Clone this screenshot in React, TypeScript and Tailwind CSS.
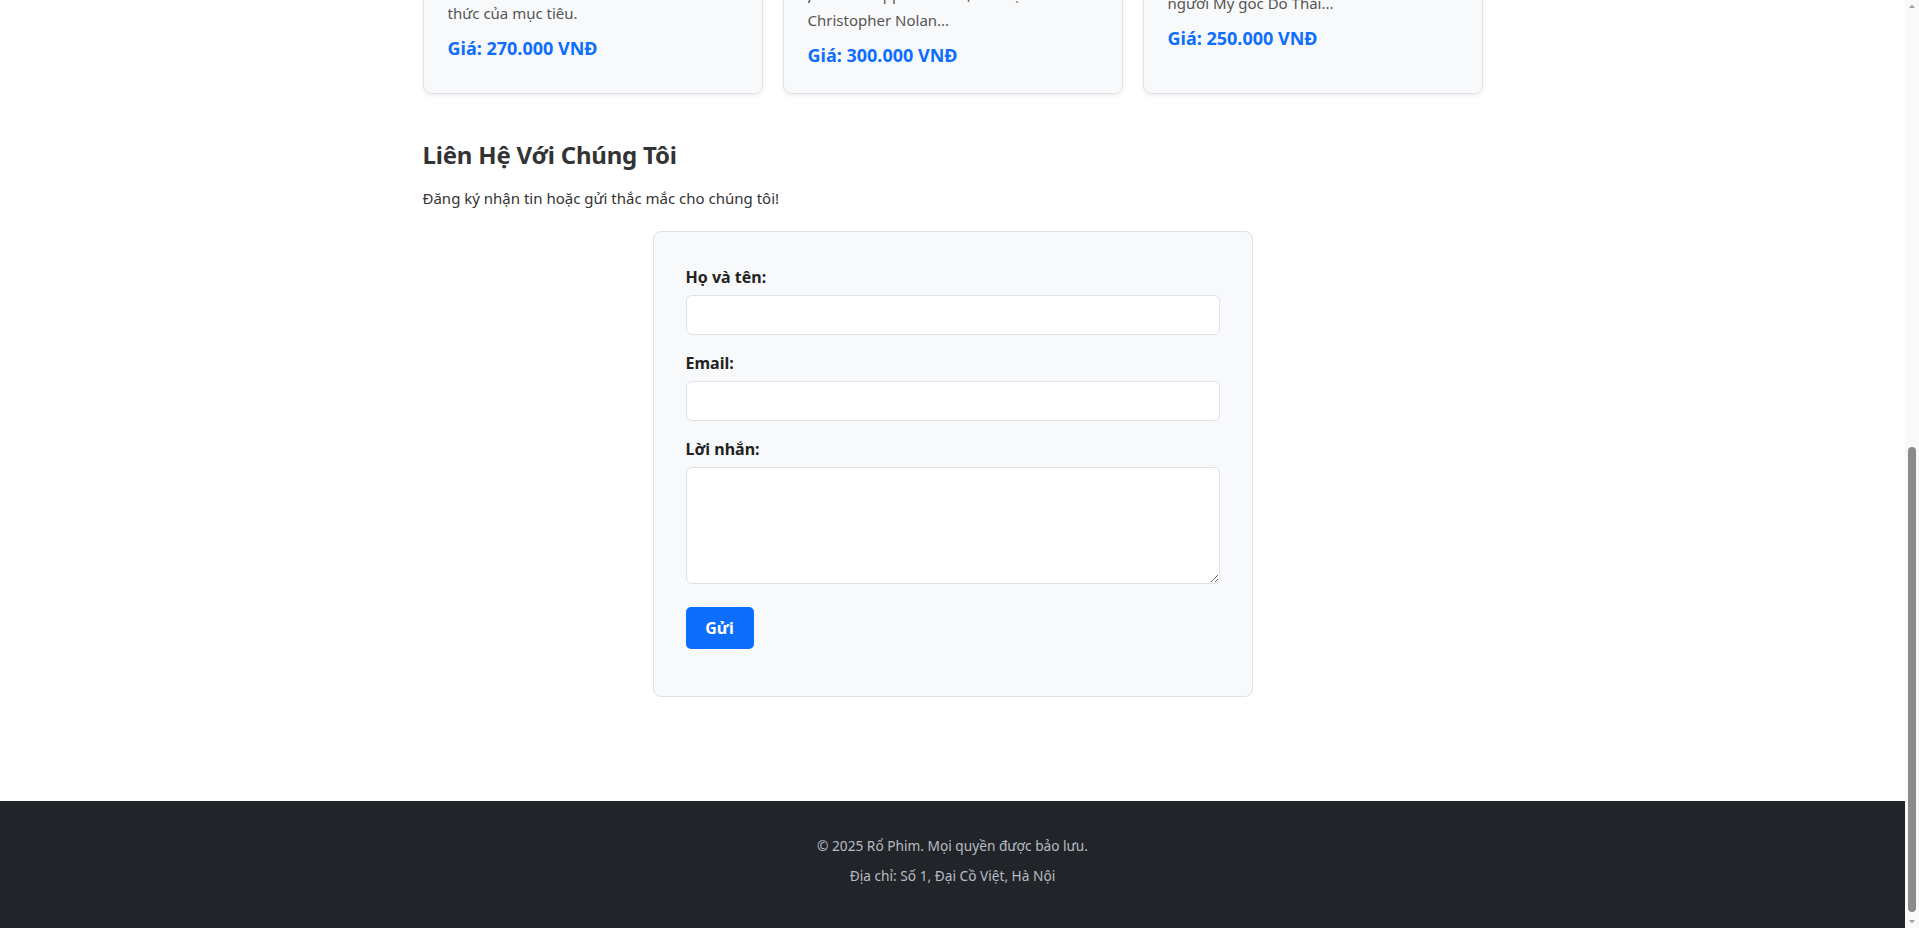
import React from "react";

type Movie = {
  title: string;
  lines: string[];
  price: string;
  posterH: string;
  poster: string;
};

const movies: Movie[] = [
  {
    title: "Inception",
    lines: ["Một tên trộm chuyên đánh cắp bí mật", "bằng cách xâm nhập vào tiềm", "thức của mục tiêu."],
    price: "Giá: 270.000 VNĐ",
    posterH: "h-[373px]",
    poster: "from-[#1e3a5f] to-[#0b1622]",
  },
  {
    title: "Oppenheimer",
    lines: ["Câu chuyện về cha đẻ bom nguyên tử", "J. Robert Oppenheimer, của đạo diễn", "Christopher Nolan..."],
    price: "Giá: 300.000 VNĐ",
    posterH: "h-[380px]",
    poster: "from-[#6b3a1e] to-[#1a0f08]",
  },
  {
    title: "Schindler's List",
    lines: ["Câu chuyện có thật về doanh nhân", "Oskar Schindler cứu hơn một nghìn", "người Mỹ gốc Do Thái..."],
    price: "Giá: 250.000 VNĐ",
    posterH: "h-[363px]",
    poster: "from-[#444444] to-[#111111]",
  },
];

function MovieCard({ movie }: { movie: Movie }) {
  return (
    <div className="flex flex-col overflow-hidden rounded-lg border border-[#dee2e6] bg-[#f8f9fa] shadow-[0_2px_4px_rgba(0,0,0,0.06)]">
      <div className={`${movie.posterH} w-full shrink-0 bg-gradient-to-b ${movie.poster}`} />
      <div className="p-6">
        <h3 className="mb-2 text-[20px] font-bold leading-7 text-[#333]">{movie.title}</h3>
        <p className="mb-[8px] text-[15px] leading-[26px] text-[#555]">
          {movie.lines.map((l, i) => (
            <span key={i} className="block overflow-hidden whitespace-nowrap">
              {l}
            </span>
          ))}
        </p>
        <p className="text-[18px] font-bold leading-[28px] text-[#0d6efd]">{movie.price}</p>
      </div>
    </div>
  );
}

function Field({ label, children }: { label: string; children: React.ReactNode }) {
  return (
    <div className="mb-4 flex flex-col">
      <label className="mb-[6px] text-[16px] font-bold leading-6 text-[#222]">{label}</label>
      {children}
    </div>
  );
}

export default function App() {
  return (
    <div className="flex h-[928px] w-full overflow-hidden bg-white font-['Noto_Sans',sans-serif] text-[#333]">
      {/* trang đã cuộn xuống cuối */}
      <div className="flex min-w-0 flex-1 flex-col justify-end overflow-hidden">
        <main className="mx-auto w-full max-w-[1100px] shrink-0 px-5 pb-[104px]">
          <div className="grid grid-cols-3 gap-5">
            {movies.map((m) => (
              <MovieCard key={m.title} movie={m} />
            ))}
          </div>

          <section className="mt-[46px]">
            <h2 className="mb-4 text-[24px] font-bold leading-[30px] tracking-[-0.2px] text-[#333]">
              Liên Hệ Với Chúng Tôi
            </h2>
            <p className="mb-[21px] text-[15px] leading-6 text-[#333]">
              Đăng ký nhận tin hoặc gửi thắc mắc cho chúng tôi!
            </p>

            <form className="mx-auto w-[600px] rounded-lg border border-[#dee2e6] bg-[#f8f9fa] px-8 pb-[47px] pt-[33px]">
              <Field label="Họ và tên:">
                <input
                  type="text"
                  className="h-10 w-full rounded-md border border-[#dee2e6] bg-white px-3 outline-none"
                />
              </Field>
              <Field label="Email:">
                <input
                  type="email"
                  className="h-10 w-full rounded-md border border-[#dee2e6] bg-white px-3 outline-none"
                />
              </Field>
              <div className="mb-[23px] flex flex-col">
                <label className="mb-[6px] text-[16px] font-bold leading-6 text-[#222]">Lời nhắn:</label>
                <textarea className="block h-[117px] w-full rounded-md border border-[#dee2e6] bg-white px-3 py-2 outline-none" />
              </div>
              <button
                type="button"
                className="h-[42px] w-[68px] rounded-[5px] bg-[#0d6efd] text-[16px] font-bold text-white"
              >
                Gửi
              </button>
            </form>
          </section>
        </main>

        <footer className="shrink-0 bg-[#212529] pb-[41px] pt-[34px] text-center text-[13.7px] text-[#b8bcc1]">
          <p className="mb-2 leading-[22px]">© 2025 Rổ Phim. Mọi quyền được bảo lưu.</p>
          <p className="leading-[22px]">Địa chỉ: Số 1, Đại Cồ Việt, Hà Nội</p>
        </footer>
      </div>

      {/* thanh cuộn */}
      <div className="flex w-[14px] shrink-0 flex-col items-center bg-[#f9f9f9]">
        <svg width="10" height="10" viewBox="0 0 10 10" className="mt-[1px]">
          <path d="M2 7 L5 3.5 L8 7 Z" fill="#a3a3a3" />
        </svg>
        <div className="mt-[436px] h-[465px] w-[8px] rounded-full bg-[#8b8b8b]" />
        <svg width="10" height="10" viewBox="0 0 10 10" className="mt-[5px]">
          <path d="M2 3 L5 6.5 L8 3 Z" fill="#a3a3a3" />
        </svg>
      </div>
    </div>
  );
}
